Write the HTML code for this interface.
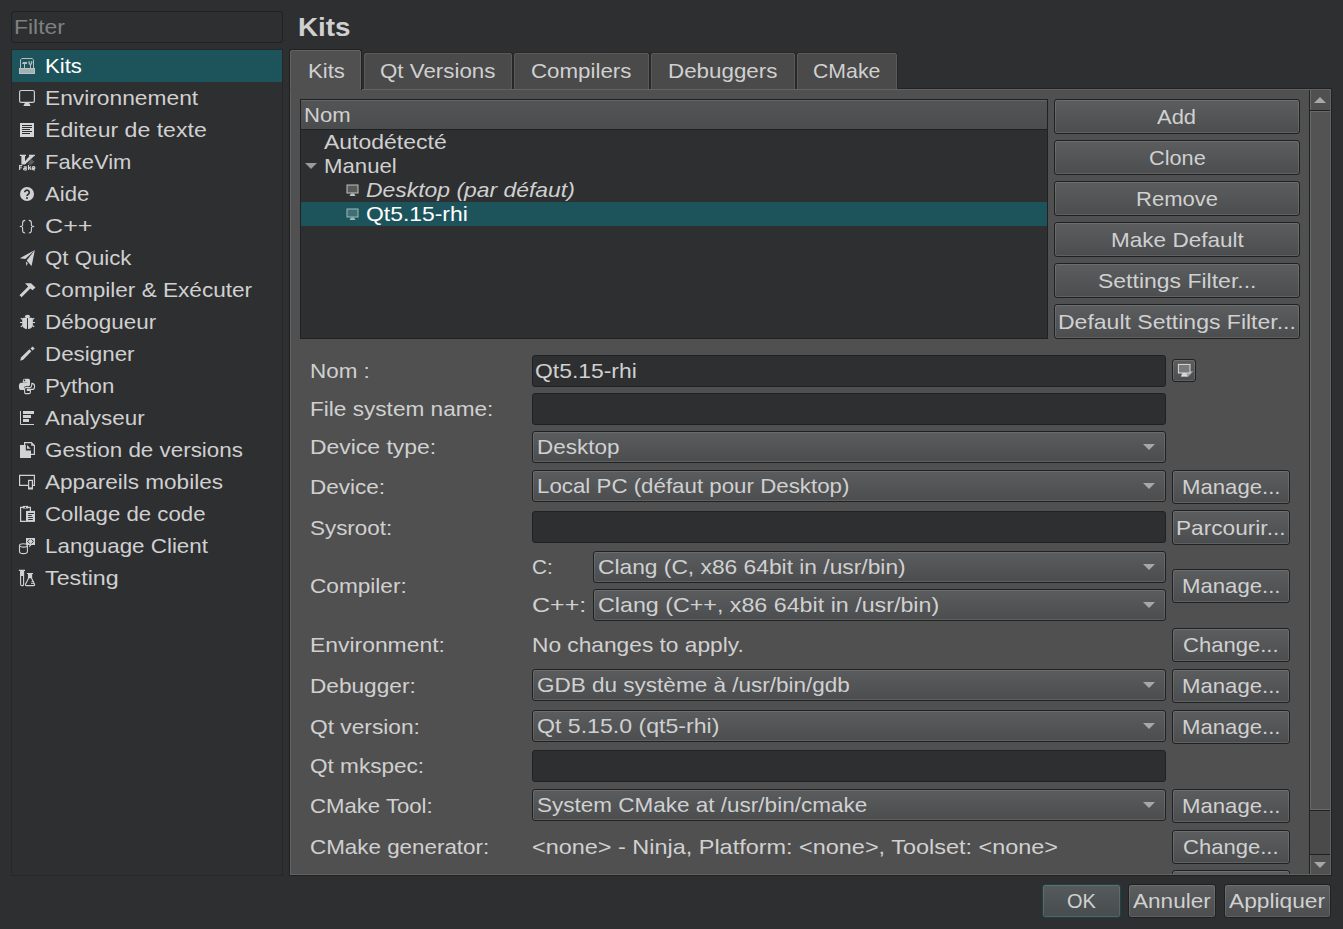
<!DOCTYPE html><html><head><meta charset="utf-8"><style>
html,body{margin:0;padding:0;width:1343px;height:929px;overflow:hidden;background:#2e2f30;}
.r{position:absolute;}
.t{position:absolute;white-space:pre;font-family:"Liberation Sans",sans-serif;transform-origin:0 0;}
</style></head><body><div class="r" style="left:11px;top:11px;width:272px;height:32px;box-sizing:border-box;border:1px solid #202122;border-radius:3px;background:#2e2f30"></div><div class="t" style="transform:scaleX(1.0924);left:14.00px;top:15px;font-size:21px;line-height:24px;font-weight:normal;font-style:normal;color:#7f8080;">Filter</div><div class="r" style="left:11px;top:49px;width:272px;height:827px;box-sizing:border-box;border:1px solid #262728;background:#2e2f30"></div><div class="r" style="left:12px;top:50px;width:270px;height:32px;background:#1d545c"></div><div class="t" style="transform:scaleX(1.0548);left:45.00px;top:54px;font-size:21px;line-height:24px;font-weight:normal;font-style:normal;color:#ffffff;">Kits</div><div class="t" style="transform:scaleX(1.0841);left:45.00px;top:86px;font-size:21px;line-height:24px;font-weight:normal;font-style:normal;color:#d0d0d0;">Environnement</div><div class="t" style="transform:scaleX(1.0998);left:45.00px;top:118px;font-size:21px;line-height:24px;font-weight:normal;font-style:normal;color:#d0d0d0;">Éditeur de texte</div><div class="t" style="transform:scaleX(1.0471);left:45.00px;top:150px;font-size:21px;line-height:24px;font-weight:normal;font-style:normal;color:#d0d0d0;">FakeVim</div><div class="t" style="transform:scaleX(1.0525);left:45.00px;top:182px;font-size:21px;line-height:24px;font-weight:normal;font-style:normal;color:#d0d0d0;">Aide</div><div class="t" style="transform:scaleX(1.1959);left:45.00px;top:214px;font-size:21px;line-height:24px;font-weight:normal;font-style:normal;color:#d0d0d0;">C++</div><div class="t" style="transform:scaleX(1.0588);left:45.00px;top:246px;font-size:21px;line-height:24px;font-weight:normal;font-style:normal;color:#d0d0d0;">Qt Quick</div><div class="t" style="transform:scaleX(1.0757);left:45.00px;top:278px;font-size:21px;line-height:24px;font-weight:normal;font-style:normal;color:#d0d0d0;">Compiler &amp; Exécuter</div><div class="t" style="transform:scaleX(1.0701);left:45.00px;top:310px;font-size:21px;line-height:24px;font-weight:normal;font-style:normal;color:#d0d0d0;">Débogueur</div><div class="t" style="transform:scaleX(1.0658);left:45.00px;top:342px;font-size:21px;line-height:24px;font-weight:normal;font-style:normal;color:#d0d0d0;">Designer</div><div class="t" style="transform:scaleX(1.0602);left:45.00px;top:374px;font-size:21px;line-height:24px;font-weight:normal;font-style:normal;color:#d0d0d0;">Python</div><div class="t" style="transform:scaleX(1.0668);left:45.00px;top:406px;font-size:21px;line-height:24px;font-weight:normal;font-style:normal;color:#d0d0d0;">Analyseur</div><div class="t" style="transform:scaleX(1.0663);left:45.00px;top:438px;font-size:21px;line-height:24px;font-weight:normal;font-style:normal;color:#d0d0d0;">Gestion de versions</div><div class="t" style="transform:scaleX(1.0739);left:45.00px;top:470px;font-size:21px;line-height:24px;font-weight:normal;font-style:normal;color:#d0d0d0;">Appareils mobiles</div><div class="t" style="transform:scaleX(1.0576);left:45.00px;top:502px;font-size:21px;line-height:24px;font-weight:normal;font-style:normal;color:#d0d0d0;">Collage de code</div><div class="t" style="transform:scaleX(1.0653);left:45.00px;top:534px;font-size:21px;line-height:24px;font-weight:normal;font-style:normal;color:#d0d0d0;">Language Client</div><div class="t" style="transform:scaleX(1.1077);left:45.00px;top:566px;font-size:21px;line-height:24px;font-weight:normal;font-style:normal;color:#d0d0d0;">Testing</div><div class="t" style="transform:scaleX(1.1132);left:297.50px;top:12px;font-size:25px;line-height:30px;font-weight:bold;font-style:normal;color:#d0d0d0;">Kits</div><div class="r" style="left:289px;top:88px;width:1043px;height:788px;box-sizing:border-box;border:1px solid #202122;background:#505050;box-shadow:inset 0 0 0 1px rgba(255,255,255,0.11)"></div><div class="r" style="left:289px;top:49px;width:73px;height:41px;box-sizing:border-box;border:1px solid #202122;border-bottom:none;border-radius:3px 3px 0 0;background:#505050;box-shadow:inset 1px 1px 0 rgba(255,255,255,0.11),inset -1px 0 0 rgba(255,255,255,0.11)"></div><div class="r" style="left:290px;top:89px;width:71px;height:1px;background:#505050"></div><div class="t" style="transform:scaleX(1.0548);left:307.53px;top:59px;font-size:21px;line-height:24px;font-weight:normal;font-style:normal;color:#d0d0d0;">Kits</div><div class="r" style="left:363px;top:52px;width:150px;height:37px;box-sizing:border-box;border:1px solid #282828;border-bottom:none;border-radius:3px 3px 0 0;background:#4a4a4a;box-shadow:inset 1px 1px 0 rgba(255,255,255,0.09),inset -1px 0 0 rgba(255,255,255,0.09)"></div><div class="t" style="transform:scaleX(1.0635);left:380.27px;top:59px;font-size:21px;line-height:24px;font-weight:normal;font-style:normal;color:#d0d0d0;">Qt Versions</div><div class="r" style="left:513px;top:52px;width:137px;height:37px;box-sizing:border-box;border:1px solid #282828;border-bottom:none;border-radius:3px 3px 0 0;background:#4a4a4a;box-shadow:inset 1px 1px 0 rgba(255,255,255,0.09),inset -1px 0 0 rgba(255,255,255,0.09)"></div><div class="t" style="transform:scaleX(1.0625);left:531.28px;top:59px;font-size:21px;line-height:24px;font-weight:normal;font-style:normal;color:#d0d0d0;">Compilers</div><div class="r" style="left:650px;top:52px;width:146px;height:37px;box-sizing:border-box;border:1px solid #282828;border-bottom:none;border-radius:3px 3px 0 0;background:#4a4a4a;box-shadow:inset 1px 1px 0 rgba(255,255,255,0.09),inset -1px 0 0 rgba(255,255,255,0.09)"></div><div class="t" style="transform:scaleX(1.0650);left:668.29px;top:59px;font-size:21px;line-height:24px;font-weight:normal;font-style:normal;color:#d0d0d0;">Debuggers</div><div class="r" style="left:796px;top:52px;width:102px;height:37px;box-sizing:border-box;border:1px solid #282828;border-bottom:none;border-radius:3px 3px 0 0;background:#4a4a4a;box-shadow:inset 1px 1px 0 rgba(255,255,255,0.09),inset -1px 0 0 rgba(255,255,255,0.09)"></div><div class="t" style="transform:scaleX(1.0125);left:813.32px;top:59px;font-size:21px;line-height:24px;font-weight:normal;font-style:normal;color:#d0d0d0;">CMake</div><div class="r" style="left:300px;top:99px;width:748px;height:240px;box-sizing:border-box;border:1px solid #202122;background:#2e2f30"></div><div class="r" style="left:301px;top:100px;width:746px;height:29px;background:linear-gradient(#535455,#4b4c4d);border-top:1px solid #646566;box-sizing:border-box"></div><div class="r" style="left:301px;top:129px;width:746px;height:1px;background:#202122"></div><div class="t" style="transform:scaleX(1.0527);left:303.50px;top:103px;font-size:21px;line-height:24px;font-weight:normal;font-style:normal;color:#d0d0d0;">Nom</div><div class="t" style="transform:scaleX(1.0948);left:324.00px;top:130px;font-size:21px;line-height:24px;font-weight:normal;font-style:normal;color:#d0d0d0;">Autodétecté</div><svg class="r" style="left:305px;top:163px" width="12" height="6"><polygon points="0,0 12,0 6.0,6" fill="#9a9a9a"/></svg><div class="t" style="transform:scaleX(1.0557);left:324.00px;top:154px;font-size:21px;line-height:24px;font-weight:normal;font-style:normal;color:#d0d0d0;">Manuel</div><div class="r" style="left:301px;top:202px;width:746px;height:24px;background:#1d545c"></div><div class="t" style="transform:scaleX(1.0906);left:366.00px;top:178px;font-size:21px;line-height:24px;font-weight:normal;font-style:italic;color:#d0d0d0;">Desktop (par défaut)</div><div class="t" style="transform:scaleX(1.0901);left:366.00px;top:202px;font-size:21px;line-height:24px;font-weight:normal;font-style:normal;color:#ffffff;">Qt5.15-rhi</div><div class="r" style="left:1054px;top:99px;width:246px;height:35px;box-sizing:border-box;border:1px solid #202122;border-radius:3px;background:linear-gradient(#5b5d5f,#4b4d4f);box-shadow:inset 0 0 0 1px rgba(255,255,255,0.11)"></div><div class="t" style="transform:scaleX(1.0454);left:1157.46px;top:105px;font-size:21px;line-height:24px;font-weight:normal;font-style:normal;color:#d0d0d0;">Add</div><div class="r" style="left:1054px;top:140px;width:246px;height:35px;box-sizing:border-box;border:1px solid #202122;border-radius:3px;background:linear-gradient(#5b5d5f,#4b4d4f);box-shadow:inset 0 0 0 1px rgba(255,255,255,0.11)"></div><div class="t" style="transform:scaleX(1.0340);left:1148.63px;top:146px;font-size:21px;line-height:24px;font-weight:normal;font-style:normal;color:#d0d0d0;">Clone</div><div class="r" style="left:1054px;top:181px;width:246px;height:35px;box-sizing:border-box;border:1px solid #202122;border-radius:3px;background:linear-gradient(#5b5d5f,#4b4d4f);box-shadow:inset 0 0 0 1px rgba(255,255,255,0.11)"></div><div class="t" style="transform:scaleX(1.0493);left:1135.97px;top:187px;font-size:21px;line-height:24px;font-weight:normal;font-style:normal;color:#d0d0d0;">Remove</div><div class="r" style="left:1054px;top:222px;width:246px;height:35px;box-sizing:border-box;border:1px solid #202122;border-radius:3px;background:linear-gradient(#5b5d5f,#4b4d4f);box-shadow:inset 0 0 0 1px rgba(255,255,255,0.11)"></div><div class="t" style="transform:scaleX(1.0735);left:1110.58px;top:228px;font-size:21px;line-height:24px;font-weight:normal;font-style:normal;color:#d0d0d0;">Make Default</div><div class="r" style="left:1054px;top:263px;width:246px;height:35px;box-sizing:border-box;border:1px solid #202122;border-radius:3px;background:linear-gradient(#5b5d5f,#4b4d4f);box-shadow:inset 0 0 0 1px rgba(255,255,255,0.11)"></div><div class="t" style="transform:scaleX(1.0947);left:1097.78px;top:269px;font-size:21px;line-height:24px;font-weight:normal;font-style:normal;color:#d0d0d0;">Settings Filter...</div><div class="r" style="left:1054px;top:304px;width:246px;height:35px;box-sizing:border-box;border:1px solid #202122;border-radius:3px;background:linear-gradient(#5b5d5f,#4b4d4f);box-shadow:inset 0 0 0 1px rgba(255,255,255,0.11)"></div><div class="t" style="transform:scaleX(1.0957);left:1058.06px;top:310px;font-size:21px;line-height:24px;font-weight:normal;font-style:normal;color:#d0d0d0;">Default Settings Filter...</div><div class="r" style="left:1309px;top:90px;width:1px;height:784px;background:#202122"></div><div class="r" style="left:1310px;top:90px;width:20px;height:20px;background:#505050;box-shadow:inset 1px 0 0 #6a6a6a"></div><svg class="r" style="left:1314px;top:97px" width="12" height="6"><polygon points="0,6 12,6 6.0,0" fill="#a8a8a8"/></svg><div class="r" style="left:1310px;top:110px;width:20px;height:1px;background:#202122"></div><div class="r" style="left:1310px;top:111px;width:20px;height:699px;box-sizing:border-box;border:1px solid #6a6a6a;border-right:none;background:#535353"></div><div class="r" style="left:1310px;top:810px;width:20px;height:1px;background:#202122"></div><div class="r" style="left:1310px;top:811px;width:20px;height:43px;background:#4a4a4a"></div><div class="r" style="left:1310px;top:854px;width:20px;height:1px;background:#202122"></div><div class="r" style="left:1310px;top:855px;width:20px;height:19px;background:#505050;box-shadow:inset 1px 0 0 #6a6a6a"></div><svg class="r" style="left:1314px;top:862px" width="12" height="6"><polygon points="0,0 12,0 6.0,6" fill="#a8a8a8"/></svg><div class="t" style="transform:scaleX(1.0671);left:310.00px;top:359px;font-size:21px;line-height:24px;font-weight:normal;font-style:normal;color:#d0d0d0;">Nom :</div><div class="r" style="left:532px;top:355px;width:634px;height:32px;box-sizing:border-box;border:1px solid #202122;border-radius:3px;background:#2e2f30"></div><div class="t" style="transform:scaleX(1.0901);left:535.00px;top:359px;font-size:21px;line-height:24px;font-weight:normal;font-style:normal;color:#d0d0d0;">Qt5.15-rhi</div><div class="r" style="left:1172px;top:359px;width:24px;height:23px;box-sizing:border-box;border:1px solid #202122;border-radius:3px;background:linear-gradient(#5b5d5f,#4b4d4f);box-shadow:inset 0 0 0 1px rgba(255,255,255,0.11)"></div><div class="t" style="transform:scaleX(1.0763);left:310.00px;top:397px;font-size:21px;line-height:24px;font-weight:normal;font-style:normal;color:#d0d0d0;">File system name:</div><div class="r" style="left:532px;top:393px;width:634px;height:32px;box-sizing:border-box;border:1px solid #202122;border-radius:3px;background:#2e2f30"></div><div class="t" style="transform:scaleX(1.0918);left:310.00px;top:435px;font-size:21px;line-height:24px;font-weight:normal;font-style:normal;color:#d0d0d0;">Device type:</div><div class="r" style="left:532px;top:431px;width:634px;height:32px;box-sizing:border-box;border:1px solid #202122;border-radius:3px;background:linear-gradient(#5a5c5e,#4b4d4f);box-shadow:inset 0 0 0 1px rgba(255,255,255,0.10)"></div><div class="t" style="transform:scaleX(1.0705);left:537.00px;top:435px;font-size:21px;line-height:24px;font-weight:normal;font-style:normal;color:#d0d0d0;">Desktop</div><svg class="r" style="left:1143px;top:444px" width="12" height="6"><polygon points="0,0 12,0 6.0,6" fill="#a8a8a8"/></svg><div class="t" style="transform:scaleX(1.0729);left:310.00px;top:475px;font-size:21px;line-height:24px;font-weight:normal;font-style:normal;color:#d0d0d0;">Device:</div><div class="r" style="left:532px;top:470px;width:634px;height:32px;box-sizing:border-box;border:1px solid #202122;border-radius:3px;background:linear-gradient(#5a5c5e,#4b4d4f);box-shadow:inset 0 0 0 1px rgba(255,255,255,0.10)"></div><div class="t" style="transform:scaleX(1.0619);left:537.00px;top:474px;font-size:21px;line-height:24px;font-weight:normal;font-style:normal;color:#d0d0d0;">Local PC (défaut pour Desktop)</div><svg class="r" style="left:1143px;top:483px" width="12" height="6"><polygon points="0,0 12,0 6.0,6" fill="#a8a8a8"/></svg><div class="r" style="left:1172px;top:470px;width:118px;height:34px;box-sizing:border-box;border:1px solid #202122;border-radius:3px;background:linear-gradient(#5b5d5f,#4b4d4f);box-shadow:inset 0 0 0 1px rgba(255,255,255,0.11)"></div><div class="t" style="transform:scaleX(1.0547);left:1181.74px;top:475px;font-size:21px;line-height:24px;font-weight:normal;font-style:normal;color:#d0d0d0;">Manage...</div><div class="t" style="transform:scaleX(1.0674);left:310.00px;top:516px;font-size:21px;line-height:24px;font-weight:normal;font-style:normal;color:#d0d0d0;">Sysroot:</div><div class="r" style="left:532px;top:511px;width:634px;height:32px;box-sizing:border-box;border:1px solid #202122;border-radius:3px;background:#2e2f30"></div><div class="r" style="left:1172px;top:510px;width:118px;height:35px;box-sizing:border-box;border:1px solid #202122;border-radius:3px;background:linear-gradient(#5b5d5f,#4b4d4f);box-shadow:inset 0 0 0 1px rgba(255,255,255,0.11)"></div><div class="t" style="transform:scaleX(1.0785);left:1176.24px;top:516px;font-size:21px;line-height:24px;font-weight:normal;font-style:normal;color:#d0d0d0;">Parcourir...</div><div class="t" style="transform:scaleX(1.0768);left:310.00px;top:574px;font-size:21px;line-height:24px;font-weight:normal;font-style:normal;color:#d0d0d0;">Compiler:</div><div class="t" style="transform:scaleX(0.9859);left:531.50px;top:555px;font-size:21px;line-height:24px;font-weight:normal;font-style:normal;color:#d0d0d0;">C:</div><div class="r" style="left:593px;top:551px;width:573px;height:32px;box-sizing:border-box;border:1px solid #202122;border-radius:3px;background:linear-gradient(#5a5c5e,#4b4d4f);box-shadow:inset 0 0 0 1px rgba(255,255,255,0.10)"></div><div class="t" style="transform:scaleX(1.0846);left:598.00px;top:555px;font-size:21px;line-height:24px;font-weight:normal;font-style:normal;color:#d0d0d0;">Clang (C, x86 64bit in /usr/bin)</div><svg class="r" style="left:1143px;top:564px" width="12" height="6"><polygon points="0,0 12,0 6.0,6" fill="#a8a8a8"/></svg><div class="t" style="transform:scaleX(1.1908);left:531.50px;top:593px;font-size:21px;line-height:24px;font-weight:normal;font-style:normal;color:#d0d0d0;">C++:</div><div class="r" style="left:593px;top:589px;width:573px;height:32px;box-sizing:border-box;border:1px solid #202122;border-radius:3px;background:linear-gradient(#5a5c5e,#4b4d4f);box-shadow:inset 0 0 0 1px rgba(255,255,255,0.10)"></div><div class="t" style="transform:scaleX(1.1071);left:598.00px;top:593px;font-size:21px;line-height:24px;font-weight:normal;font-style:normal;color:#d0d0d0;">Clang (C++, x86 64bit in /usr/bin)</div><svg class="r" style="left:1143px;top:602px" width="12" height="6"><polygon points="0,0 12,0 6.0,6" fill="#a8a8a8"/></svg><div class="r" style="left:1172px;top:569px;width:118px;height:34px;box-sizing:border-box;border:1px solid #202122;border-radius:3px;background:linear-gradient(#5b5d5f,#4b4d4f);box-shadow:inset 0 0 0 1px rgba(255,255,255,0.11)"></div><div class="t" style="transform:scaleX(1.0547);left:1181.74px;top:574px;font-size:21px;line-height:24px;font-weight:normal;font-style:normal;color:#d0d0d0;">Manage...</div><div class="t" style="transform:scaleX(1.0901);left:310.00px;top:633px;font-size:21px;line-height:24px;font-weight:normal;font-style:normal;color:#d0d0d0;">Environment:</div><div class="t" style="transform:scaleX(1.0818);left:532.00px;top:633px;font-size:21px;line-height:24px;font-weight:normal;font-style:normal;color:#d0d0d0;">No changes to apply.</div><div class="r" style="left:1172px;top:628px;width:118px;height:34px;box-sizing:border-box;border:1px solid #202122;border-radius:3px;background:linear-gradient(#5b5d5f,#4b4d4f);box-shadow:inset 0 0 0 1px rgba(255,255,255,0.11)"></div><div class="t" style="transform:scaleX(1.0501);left:1183.18px;top:633px;font-size:21px;line-height:24px;font-weight:normal;font-style:normal;color:#d0d0d0;">Change...</div><div class="t" style="transform:scaleX(1.0780);left:310.00px;top:674px;font-size:21px;line-height:24px;font-weight:normal;font-style:normal;color:#d0d0d0;">Debugger:</div><div class="r" style="left:532px;top:669px;width:634px;height:32px;box-sizing:border-box;border:1px solid #202122;border-radius:3px;background:linear-gradient(#5a5c5e,#4b4d4f);box-shadow:inset 0 0 0 1px rgba(255,255,255,0.10)"></div><div class="t" style="transform:scaleX(1.0720);left:537.00px;top:673px;font-size:21px;line-height:24px;font-weight:normal;font-style:normal;color:#d0d0d0;">GDB du système à /usr/bin/gdb</div><svg class="r" style="left:1143px;top:682px" width="12" height="6"><polygon points="0,0 12,0 6.0,6" fill="#a8a8a8"/></svg><div class="r" style="left:1172px;top:669px;width:118px;height:34px;box-sizing:border-box;border:1px solid #202122;border-radius:3px;background:linear-gradient(#5b5d5f,#4b4d4f);box-shadow:inset 0 0 0 1px rgba(255,255,255,0.11)"></div><div class="t" style="transform:scaleX(1.0547);left:1181.74px;top:674px;font-size:21px;line-height:24px;font-weight:normal;font-style:normal;color:#d0d0d0;">Manage...</div><div class="t" style="transform:scaleX(1.0826);left:310.00px;top:715px;font-size:21px;line-height:24px;font-weight:normal;font-style:normal;color:#d0d0d0;">Qt version:</div><div class="r" style="left:532px;top:710px;width:634px;height:32px;box-sizing:border-box;border:1px solid #202122;border-radius:3px;background:linear-gradient(#5a5c5e,#4b4d4f);box-shadow:inset 0 0 0 1px rgba(255,255,255,0.10)"></div><div class="t" style="transform:scaleX(1.1009);left:537.00px;top:714px;font-size:21px;line-height:24px;font-weight:normal;font-style:normal;color:#d0d0d0;">Qt 5.15.0 (qt5-rhi)</div><svg class="r" style="left:1143px;top:723px" width="12" height="6"><polygon points="0,0 12,0 6.0,6" fill="#a8a8a8"/></svg><div class="r" style="left:1172px;top:710px;width:118px;height:34px;box-sizing:border-box;border:1px solid #202122;border-radius:3px;background:linear-gradient(#5b5d5f,#4b4d4f);box-shadow:inset 0 0 0 1px rgba(255,255,255,0.11)"></div><div class="t" style="transform:scaleX(1.0547);left:1181.74px;top:715px;font-size:21px;line-height:24px;font-weight:normal;font-style:normal;color:#d0d0d0;">Manage...</div><div class="t" style="transform:scaleX(1.0749);left:310.00px;top:754px;font-size:21px;line-height:24px;font-weight:normal;font-style:normal;color:#d0d0d0;">Qt mkspec:</div><div class="r" style="left:532px;top:750px;width:634px;height:32px;box-sizing:border-box;border:1px solid #202122;border-radius:3px;background:#2e2f30"></div><div class="t" style="transform:scaleX(1.0547);left:310.00px;top:794px;font-size:21px;line-height:24px;font-weight:normal;font-style:normal;color:#d0d0d0;">CMake Tool:</div><div class="r" style="left:532px;top:789px;width:634px;height:32px;box-sizing:border-box;border:1px solid #202122;border-radius:3px;background:linear-gradient(#5a5c5e,#4b4d4f);box-shadow:inset 0 0 0 1px rgba(255,255,255,0.10)"></div><div class="t" style="transform:scaleX(1.0717);left:537.00px;top:793px;font-size:21px;line-height:24px;font-weight:normal;font-style:normal;color:#d0d0d0;">System CMake at /usr/bin/cmake</div><svg class="r" style="left:1143px;top:802px" width="12" height="6"><polygon points="0,0 12,0 6.0,6" fill="#a8a8a8"/></svg><div class="r" style="left:1172px;top:789px;width:118px;height:34px;box-sizing:border-box;border:1px solid #202122;border-radius:3px;background:linear-gradient(#5b5d5f,#4b4d4f);box-shadow:inset 0 0 0 1px rgba(255,255,255,0.11)"></div><div class="t" style="transform:scaleX(1.0547);left:1181.74px;top:794px;font-size:21px;line-height:24px;font-weight:normal;font-style:normal;color:#d0d0d0;">Manage...</div><div class="t" style="transform:scaleX(1.0662);left:310.00px;top:835px;font-size:21px;line-height:24px;font-weight:normal;font-style:normal;color:#d0d0d0;">CMake generator:</div><div class="t" style="transform:scaleX(1.1161);left:532.00px;top:835px;font-size:21px;line-height:24px;font-weight:normal;font-style:normal;color:#d0d0d0;">&lt;none&gt; - Ninja, Platform: &lt;none&gt;, Toolset: &lt;none&gt;</div><div class="r" style="left:1172px;top:830px;width:118px;height:34px;box-sizing:border-box;border:1px solid #202122;border-radius:3px;background:linear-gradient(#5b5d5f,#4b4d4f);box-shadow:inset 0 0 0 1px rgba(255,255,255,0.11)"></div><div class="t" style="transform:scaleX(1.0501);left:1183.18px;top:835px;font-size:21px;line-height:24px;font-weight:normal;font-style:normal;color:#d0d0d0;">Change...</div><div class="r" style="left:1172px;top:870px;width:118px;height:4px;overflow:hidden"><div style="width:118px;height:34px;box-sizing:border-box;border:1px solid #202122;border-radius:3px;background:linear-gradient(#5b5d5f,#4b4d4f);box-shadow:inset 0 0 0 1px rgba(255,255,255,0.11)"></div></div><div class="r" style="left:1042px;top:884px;width:79px;height:34px;box-sizing:border-box;border:1px solid #174349;border-radius:3px;background:linear-gradient(#555a5c,#474c4e);box-shadow:inset 0 0 0 1px rgba(255,255,255,0.11)"></div><div class="t" style="transform:scaleX(0.9510);left:1067.07px;top:889px;font-size:21px;line-height:24px;font-weight:normal;font-style:normal;color:#d0d0d0;">OK</div><div class="r" style="left:1128px;top:884px;width:88px;height:34px;box-sizing:border-box;border:1px solid #202122;border-radius:3px;background:linear-gradient(#5b5d5f,#4b4d4f);box-shadow:inset 0 0 0 1px rgba(255,255,255,0.11)"></div><div class="t" style="transform:scaleX(1.0746);left:1133.10px;top:889px;font-size:21px;line-height:24px;font-weight:normal;font-style:normal;color:#d0d0d0;">Annuler</div><div class="r" style="left:1224px;top:884px;width:107px;height:34px;box-sizing:border-box;border:1px solid #202122;border-radius:3px;background:linear-gradient(#5b5d5f,#4b4d4f);box-shadow:inset 0 0 0 1px rgba(255,255,255,0.11)"></div><div class="t" style="transform:scaleX(1.0828);left:1229.46px;top:889px;font-size:21px;line-height:24px;font-weight:normal;font-style:normal;color:#d0d0d0;">Appliquer</div><svg class="r" style="left:17px;top:56px;" width="20" height="20" viewBox="0 0 20 20"><path d="M3.5 12V3.8L4.8 2.5H15.2L16.5 3.8V12" fill="none" stroke="#b2bfc1" stroke-width="1"/><rect x="2" y="12" width="16" height="6" fill="#a3b1b3"/><rect x="2.5" y="12.5" width="15" height="5" fill="none" stroke="#b6c2c4" stroke-width="1"/><path d="M5 7.9L6 6H10V7.9z" fill="#b2bfc1"/><rect x="7" y="7.9" width="1" height="4.1" fill="#b2bfc1"/><path d="M12.1 5.2V7Q12.1 8.4 13.4 8.4Q14.6 8.4 14.6 7V5.2" fill="none" stroke="#b2bfc1" stroke-width="1.4"/><rect x="13" y="8.4" width="1" height="3.6" fill="#b2bfc1"/></svg><svg class="r" style="left:17px;top:88px;" width="20" height="20" viewBox="0 0 20 20"><rect x="2.6" y="2.5" width="14.8" height="11.9" rx="1.6" fill="none" stroke="#d2d2d2" stroke-width="1.15"/><path d="M7.9 15H12.1L13.6 18H6.4z" fill="#d2d2d2"/></svg><svg class="r" style="left:17px;top:120px;" width="20" height="20" viewBox="0 0 20 20"><rect x="3" y="3" width="14" height="14" fill="#d6d6d6"/><path d="M5 5.5H15M5 7.5H15M5 9.5H13M5 11.5H15M5 13.5H13" stroke="#2e2f30" stroke-width="1"/></svg><svg class="r" style="left:17px;top:152px;" width="20" height="20" viewBox="0 0 20 20"><path d="M10.8 12L14 7.1L17.6 9.7L14 12.9z" fill="#5c5c5c"/><path d="M2.8 2.8H9V4H8V9.3L12.6 4H12V2.8H17.9V4H17.2L8 12.4H4.4V4H2.8z" fill="#d2d2d2"/><path d="M2.6 18V13.6H5.2M2.6 15.7H4.8M6.8 14.8H9.2V18H7.4Q6.6 18 6.6 17.1Q6.6 16.3 7.4 16.3H9.2M11.5 13V18M11.8 16.3L14 14.5M12.6 15.7L14.2 18M18 16.4H15.2Q15.2 14.6 16.6 14.6Q18 14.6 18 16.4M15.3 16.6Q15.4 17.8 16.8 17.8H17.9" fill="none" stroke="#d2d2d2" stroke-width="1.15"/></svg><svg class="r" style="left:17px;top:184px;" width="20" height="20" viewBox="0 0 20 20"><circle cx="10" cy="10" r="7" fill="#d2d2d2"/><path d="M7.7 8.3A2.3 2.2 0 1 1 11.3 10.2C10.5 10.7 10 11 10 12" fill="none" stroke="#2e2f30" stroke-width="1.6"/><rect x="9.1" y="13.2" width="1.8" height="1.7" fill="#2e2f30"/></svg><svg class="r" style="left:17px;top:216px;" width="20" height="20" viewBox="0 0 20 20"><path d="M8.2 4.4Q5.6 4.4 5.6 7V9.3Q5.6 10.5 2.8 10.5Q5.6 10.5 5.6 11.7V14.5Q5.6 17 8.2 17M11.8 4.4Q14.4 4.4 14.4 7V9.3Q14.4 10.5 17.2 10.5Q14.4 10.5 14.4 11.7V14.5Q14.4 17 11.8 17" fill="none" stroke="#d2d2d2" stroke-width="1.1"/></svg><svg class="r" style="left:17px;top:248px;" width="20" height="20" viewBox="0 0 20 20"><path d="M17.9 1.9L2.8 10.3L8.4 10.9z" fill="#d2d2d2"/><path d="M17.9 1.9L9.7 12.5L14.6 17.9z" fill="#d2d2d2"/><path d="M8.8 13.8L10.8 15L9.5 17.9z" fill="#d2d2d2"/></svg><svg class="r" style="left:17px;top:280px;" width="20" height="20" viewBox="0 0 20 20"><path d="M8 3.2H14L18.5 7.4L15.5 10.2L13.3 8.4L4.6 17.2L2.5 15.3L11.2 6.5z" fill="#d2d2d2"/></svg><svg class="r" style="left:17px;top:312px;" width="20" height="20" viewBox="0 0 20 20"><ellipse cx="10.5" cy="4.5" rx="2.6" ry="1.7" fill="#d2d2d2"/><path d="M5.2 7.2Q5.2 5.8 7 5.8H14Q15.9 5.8 15.9 7.2V12Q15.9 17 10.5 17Q5.2 17 5.2 12z" fill="#d2d2d2"/><path d="M10.5 6.2V17" stroke="#2e2f30" stroke-width="1"/><path d="M3.8 6.2L5.8 7.6M3 10.5H5.5M3.8 14.8L5.8 13.4M17.2 6.2L15.2 7.6M18 10.5H15.5M17.2 14.8L15.2 13.4" stroke="#d2d2d2" stroke-width="1.2"/></svg><svg class="r" style="left:17px;top:344px;" width="20" height="20" viewBox="0 0 20 20"><path d="M3.2 16.8L4 13.6L12.3 5.2L14.4 7.3L6.2 15.8z" fill="#d2d2d2"/><path d="M15.5 2.6L17.7 4.6L15.6 6.6L13.5 4.6z" fill="#d2d2d2"/></svg><svg class="r" style="left:17px;top:376px;" width="20" height="20" viewBox="0 0 20 20"><path d="M8 2.8H11.4Q13 2.8 13 4.6V8.6Q13 10.2 11.4 10.2H8.6Q7.1 10.2 7.1 11.8V14H4.2Q1.9 14 1.9 10.4Q1.9 6.8 4.2 6.8H10V6.4H5.8V4.6Q5.8 2.8 8 2.8z" fill="#d2d2d2"/><circle cx="7.5" cy="4.4" r=".8" fill="#2e2f30"/><path d="M14.8 7.4Q17.6 7.4 17.6 10.5Q17.6 13.4 15.8 13.4H10.4V14.4H13.4V16.2Q13.4 17.6 11.8 17.6H8.6Q7.6 17.6 7.6 16.2V12.6Q7.6 11.6 8.8 11.6H12.8Q14.6 11.6 14.6 9.6z" fill="none" stroke="#d2d2d2" stroke-width="1.1"/></svg><svg class="r" style="left:17px;top:408px;" width="20" height="20" viewBox="0 0 20 20"><path d="M3.5 3V16.5H17" fill="none" stroke="#d2d2d2" stroke-width="1"/><rect x="6" y="3" width="11" height="3" fill="#d2d2d2"/><rect x="6" y="7" width="8" height="3" fill="#d2d2d2"/><rect x="6" y="11" width="6" height="3" fill="#d2d2d2"/></svg><svg class="r" style="left:17px;top:440px;" width="20" height="20" viewBox="0 0 20 20"><path d="M7.6 5V2.6H14.4L17.4 5.6V14.4H14" fill="none" stroke="#d2d2d2" stroke-width="1.2"/><path d="M14.2 2.8V5.8H17.2z" fill="#d2d2d2"/><path d="M3 5H8.8V10.4H14V18H3z" fill="#d2d2d2"/><path d="M10 5L13.8 8.8H10z" fill="#d2d2d2"/></svg><svg class="r" style="left:17px;top:472px;" width="20" height="20" viewBox="0 0 20 20"><path d="M11 13.4H2.6V3.4H17.4V13.4H16" fill="none" stroke="#d2d2d2" stroke-width="1.2"/><rect x="11.6" y="8.4" width="3.8" height="8.4" fill="#2e2f30" stroke="#d2d2d2" stroke-width="1.2"/><rect x="11" y="15.4" width="5" height="1.8" fill="#d2d2d2"/></svg><svg class="r" style="left:17px;top:504px;" width="20" height="20" viewBox="0 0 20 20"><path d="M9 17.4H3.6V3.4H13.4V6.9" fill="none" stroke="#d2d2d2" stroke-width="1.2"/><rect x="5.8" y="1.9" width="5.4" height="2.6" fill="#d2d2d2"/><circle cx="8.4" cy="3.4" r=".7" fill="#2e2f30"/><rect x="9" y="6.9" width="9" height="11" fill="#d2d2d2"/><path d="M11.2 9.5H16.8M11.2 11.5H14.8M11.2 13.5H15.8M11.2 15.5H15.8" stroke="#2e2f30" stroke-width="1"/></svg><svg class="r" style="left:17px;top:536px;" width="20" height="20" viewBox="0 0 20 20"><path d="M2.5 9.4V15.8Q2.5 17.6 6.4 17.6Q10.4 17.6 10.4 15.8V9.4" fill="none" stroke="#d2d2d2" stroke-width="1.1"/><ellipse cx="6.45" cy="9.4" rx="3.9" ry="1.7" fill="none" stroke="#d2d2d2" stroke-width="1.1"/><path d="M9 1.9H18V9H14.5L12.2 11.6L12.4 9H9z" fill="#d2d2d2"/><path d="M12.6 3.2L10.6 5.4L12.6 7.5M14.4 3.2L16.4 5.4L14.4 7.5" fill="none" stroke="#2e2f30" stroke-width="1"/></svg><svg class="r" style="left:17px;top:568px;" width="20" height="20" viewBox="0 0 20 20"><path d="M1.9 2.4H8M3.6 2.4V16.2Q3.6 17.6 5.1 17.6Q6.6 17.6 6.6 16.2V2.4" fill="none" stroke="#d2d2d2" stroke-width="1.1"/><rect x="3.6" y="3" width="3" height="5" fill="#d2d2d2"/><path d="M9.9 5.5H16M11.5 5.5V10.3L8.4 16.4Q8.2 17.6 9.6 17.6H16.5Q17.9 17.6 17.6 16.4L14.6 10.3V5.5" fill="none" stroke="#d2d2d2" stroke-width="1.1"/><rect x="11.5" y="6" width="3.1" height="4.3" fill="#d2d2d2"/><path d="M14.5 13.4H16.3M14 15.3H17" stroke="#d2d2d2" stroke-width="1"/></svg><svg class="r" style="left:346px;top:184px;" width="13" height="13" viewBox="0 0 13 13"><rect x="1" y="1" width="11" height="8" fill="#5a5a5a" stroke="#c0c0c0" stroke-width="1"/><path d="M5 9.5h3l1.5 2.5h-6z" fill="#c0c0c0"/></svg><svg class="r" style="left:346px;top:208px;" width="13" height="13" viewBox="0 0 13 13"><rect x="1" y="1" width="11" height="8" fill="#3d6f76" stroke="#9fb7ba" stroke-width="1"/><path d="M5 9.5h3l1.5 2.5h-6z" fill="#9fb7ba"/></svg><svg class="r" style="left:1165px;top:352px;" width="40" height="40" viewBox="0 0 40 40"><path d="M17.5 19.2H28.4L23 25H16z" fill="#9c9c9c"/><rect x="13.4" y="12.4" width="11.6" height="8.6" fill="#7a7a7a" stroke="#dcdcdc" stroke-width="1"/><rect x="17.7" y="21" width="3.4" height="1.3" fill="#dcdcdc"/><path d="M17.2 22.2H21.6L22.8 24.2H16z" fill="#dcdcdc"/></svg></body></html>
